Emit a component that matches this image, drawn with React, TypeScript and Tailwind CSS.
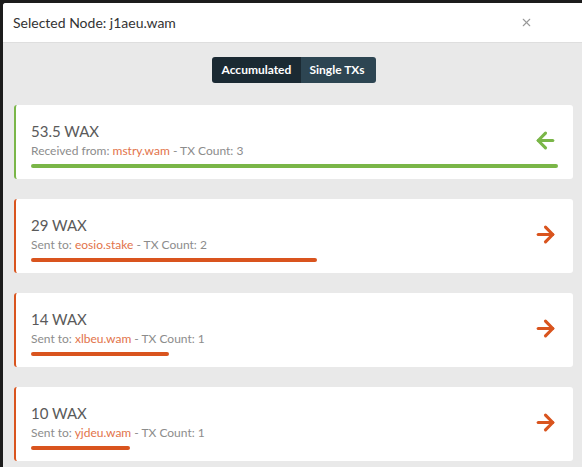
import { ArrowLeft, ArrowRight, X } from 'lucide-react';

const FONT = { fontFamily: 'Lato, "Open Sans", sans-serif' };

const transfers = [
	{ amount: '53.5', label: 'Received from:', account: 'mstry.wam', count: 3, incoming: true },
	{ amount: '29', label: 'Sent to:', account: 'eosio.stake', count: 2, incoming: false },
	{ amount: '14', label: 'Sent to:', account: 'xlbeu.wam', count: 1, incoming: false },
	{ amount: '10', label: 'Sent to:', account: 'yjdeu.wam', count: 1, incoming: false },
];

const MAX = 53.5;

export default function App() {
	return (
		<div className="w-[582px] h-[467px] bg-[#1c1c1c] pt-[3px] pl-[3px] overflow-hidden" style={FONT}>
			<div className="h-full bg-[#e9e9e9] rounded-tl-[3px] overflow-hidden flex flex-col">
				{/* Header */}
				<div className="h-[40px] bg-white border-b border-[#dedede] flex items-center justify-between pl-[10px] pr-[49px] shrink-0">
					<span className="text-[14px] text-[#333]">Selected Node: j1aeu.wam</span>
					<X className="w-[13px] h-[13px] text-[#999]" strokeWidth={2} />
				</div>

				{/* Body */}
				<div className="flex flex-col pl-[11px] pr-[9px] pt-[14px]">
					<div className="flex justify-center">
						<div className="flex h-[26px] rounded-[3px] overflow-hidden text-[12px] font-bold text-white">
							<div className="bg-[#1b2a33] px-[10px] flex items-center w-[89px]">Accumulated</div>
							<div className="bg-[#2d4552] px-[9px] flex items-center w-[75px]">Single TXs</div>
						</div>
					</div>

					<div className="flex flex-col gap-[20px] mt-[22px]">
						{transfers.map((t) => {
							const color = t.incoming ? '#7ab648' : '#d9541e';
							return (
								<div
									key={t.account}
									className={`h-[74px] bg-white rounded-[3px] border-l-2 flex items-center pl-[15px] pr-[15px] ${
										t.incoming ? 'border-[#7ab648]' : 'border-[#d9541e]'
									}`}
								>
									<div className="flex-1 flex flex-col pt-[4px]">
										<div className="flex items-center justify-between">
											<div>
												<div className="text-[15px] text-[#5a5a5a] leading-[20px]">{t.amount} WAX</div>
												<div className="text-[12px] text-[#8c8c8c] leading-[18px] mt-[1px]">
													{t.label}{' '}
													<span className="text-[#e2734a]">{t.account}</span> - TX Count: {t.count}
												</div>
											</div>
											{t.incoming ? (
												<ArrowLeft className="w-[25px] h-[25px] text-[#7ab648]" strokeWidth={3} />
											) : (
												<ArrowRight className="w-[25px] h-[25px] text-[#d9541e]" strokeWidth={3} />
											)}
										</div>
										<div className="h-[4px] mt-[4px]">
											<div
												className="h-full rounded-full"
												style={{ width: `${(parseFloat(t.amount) / MAX) * 100}%`, background: color }}
											/>
										</div>
									</div>
								</div>
							);
						})}
					</div>
				</div>
			</div>
		</div>
	);
}
